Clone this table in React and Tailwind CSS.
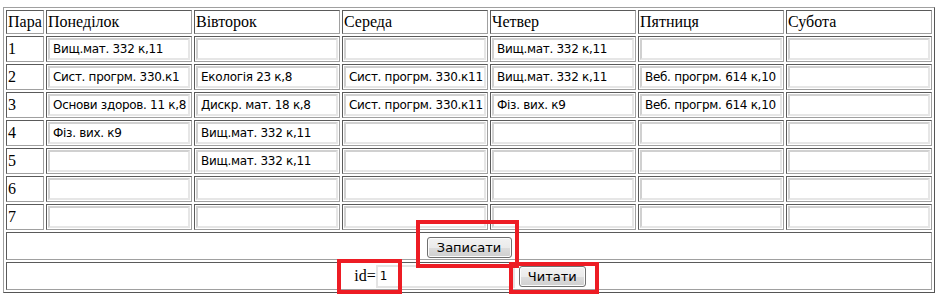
import React, { useEffect, useRef } from "react";

const DAYS = ["Понеділок", "Вівторок", "Середа", "Четвер", "Пятниця", "Субота"];

// lessons per pair (1..7), one entry per day
const SCHEDULE = [
    ["Вищ.мат. 332 к,11", "", "", "Вищ.мат. 332 к,11", "", ""],
    ["Сист. прогрм. 330.к1", "Екологія 23 к,8", "Сист. прогрм. 330.к11", "Вищ.мат. 332 к,11", "Веб. прогрм. 614 к,10", ""],
    ["Основи здоров. 11 к,8", "Дискр. мат. 18 к,8", "Сист. прогрм. 330.к11", "Фіз. вих. к9", "Веб. прогрм. 614 к,10", ""],
    ["Фіз. вих. к9", "Вищ.мат. 332 к,11", "", "", "", ""],
    ["", "Вищ.мат. 332 к,11", "", "", "", ""],
    ["", "", "", "", "", ""],
    ["", "", "", "", "", ""],
];

const cellCls = "border border-t-[#5a5a5a] border-l-[#5a5a5a] border-r-[#a0a0a0] border-b-[#a0a0a0] p-px align-middle";
const serif = "font-['Liberation_Serif',serif] text-[16px] text-black";
const sans = "font-['DejaVu_Sans',Verdana,sans-serif]";
const btnCls = `${sans} text-[13px] text-black border border-[#707070] rounded-[3px] bg-[linear-gradient(#f2f2f2,#ebebeb_50%,#dddddd_51%,#cfcfcf)] shadow-[inset_0_0_0_1px_#fcfcfc] leading-none`;

function LessonInput({ value, scrollEnd }) {
    const ref = useRef(null);

    useEffect(() => {
        // caret was left at the end, so the long value shows its tail
        if (scrollEnd && ref.current) ref.current.scrollLeft = ref.current.scrollWidth;
    }, [scrollEnd]);

    return (
        <input
            ref={ref}
            type="text"
            defaultValue={value}
            className={`${sans} block w-full h-[22px] text-[12px] tracking-[-0.3px] text-black pl-[3px] pr-px border-2 border-t-[#d0d0d0] border-l-[#d0d0d0] border-r-[#e6e6e6] border-b-[#e6e6e6] bg-white outline-none`}
        />
    );
}

export default function App() {
    return (
        <div className="relative w-[940px] h-[303px] bg-white pt-[7px] pl-[3px]">
            <table className="table-fixed border-separate border-spacing-[2px] w-[932px] border border-t-[#a0a0a0] border-l-[#a0a0a0] border-r-[#555] border-b-[#555]">
                <tbody>
                    <tr>
                        <td className={`${cellCls} ${serif} w-[38px] h-[24px] leading-none`}>Пара</td>
                        {DAYS.map(d => (
                            <td key={d} className={`${cellCls} ${serif} w-[146px] h-[24px] leading-none`}>{d}</td>
                        ))}
                    </tr>
                    {SCHEDULE.map((row, i) => (
                        <tr key={i}>
                            <td className={`${cellCls} ${serif} h-[26px] leading-none`}>{i + 1}</td>
                            {row.map((v, j) => (
                                <td key={j} className={`${cellCls} h-[26px]`}>
                                    <LessonInput value={v} scrollEnd={i === 2 && j === 0} />
                                </td>
                            ))}
                        </tr>
                    ))}
                    <tr>
                        <td colSpan={7} className={`${cellCls} h-[28px] text-center`}>
                            <button className={`${btnCls} w-[85px] h-[21px] align-middle`}>Записати</button>
                        </td>
                    </tr>
                    <tr>
                        <td colSpan={7} className={`${cellCls} h-[28px]`}>
                            <div className="flex items-center justify-center">
                                <span className={`${serif} ml-[2px]`}>id=</span>
                                <input
                                    type="text"
                                    defaultValue="1"
                                    className={`${sans} w-[139px] h-[23px] text-[12px] text-black px-[2px] border-2 border-[#e4e4e4] bg-white outline-none`}
                                />
                                <button className={`${btnCls} ml-[4px] w-[67px] h-[21px]`}>Читати</button>
                            </div>
                        </td>
                    </tr>
                </tbody>
            </table>

            {/* red highlight frames drawn over the form controls */}
            <div className="absolute left-[416px] top-[220px] w-[103px] h-[48px] border-4 border-[#ed1c24]" />
            <div className="absolute left-[337px] top-[259px] w-[65px] h-[35px] border-4 border-[#ed1c24]" />
            <div className="absolute left-[509px] top-[262px] w-[90px] h-[32px] border-4 border-[#ed1c24]" />
        </div>
    );
}
